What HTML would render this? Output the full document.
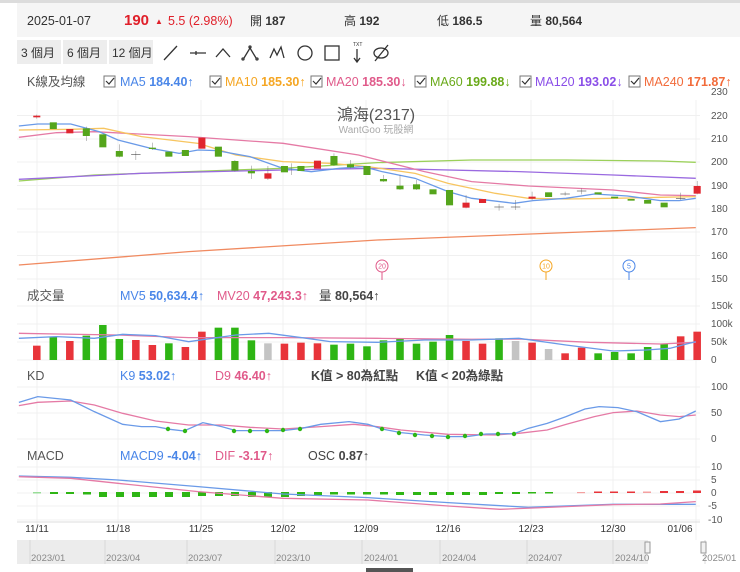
<!DOCTYPE html>
<html><head><meta charset="utf-8"><style>
body{margin:0;width:740px;height:572px;overflow:hidden;background:#fff;font-family:"Liberation Sans","Noto Sans CJK TC",sans-serif;}
svg{position:absolute;left:0;top:0}
text{font-family:"Liberation Sans","Noto Sans CJK TC",sans-serif}
.ns{vector-effect:non-scaling-stroke;fill:none}
</style></head><body>
<svg width="740" height="572" viewBox="0 0 740 572">
<rect x="0" y="0" width="740" height="3" fill="#dcdcdc"/>
<rect x="17" y="3" width="723" height="34" fill="#f5f5f5"/>
<g font-size="13" fill="#333">
<text x="27" y="25" font-size="12.5">2025-01-07</text>
<text x="124" y="25" font-size="15" font-weight="bold" fill="#e0202a">190</text>
<text x="155" y="24" font-size="8" fill="#e0202a">▲</text>
<text x="168" y="25" font-size="12.5" fill="#e0202a">5.5 (2.98%)</text>
<text x="250" y="25" font-size="12">開 <tspan font-weight="bold">187</tspan></text>
<text x="344" y="25" font-size="12">高 <tspan font-weight="bold">192</tspan></text>
<text x="437" y="25" font-size="12">低 <tspan font-weight="bold">186.5</tspan></text>
<text x="530" y="25" font-size="12">量 <tspan font-weight="bold">80,564</tspan></text>
</g>
<g fill="#ededed"><rect x="17" y="40" width="44" height="24"/><rect x="63" y="40" width="44" height="24"/><rect x="109" y="40" width="44" height="24"/></g>
<g font-size="12" fill="#333"><text x="21" y="57">3 個月</text><text x="67" y="57">6 個月</text><text x="112" y="57">12 個月</text></g>
<g stroke="#333" stroke-width="1.3" fill="none">
<path d="M164 60 L177 46"/>
<path d="M190 53 H206 M196 51 V55"/>
<path d="M216 57 L223 49 L230 57"/>
<path d="M244 58 L250 48 L256 58"/><circle cx="250" cy="47" r="1" /><circle cx="243" cy="59" r="1"/><circle cx="257" cy="59" r="1"/>
<path d="M270 58 L274 49 L277 55 L281 47 L284 58"/>
<circle cx="305" cy="53" r="7"/>
<rect x="325" y="46" width="14" height="14"/>
<path d="M357 49 V62 M354 58 L357 62 L360 58"/>
<ellipse cx="381" cy="53" rx="7" ry="5"/><path d="M375 61 L388 45"/>
</g>
<text x="353" y="46" font-size="5" fill="#333">TXT</text>
<!-- MA legend -->
<g font-size="12.5">
<text x="27" y="86" fill="#555">K線及均線</text>
<g fill="#fff" stroke="#777"><rect x="104" y="76" width="11" height="11"/><rect x="210" y="76" width="11" height="11"/><rect x="311" y="76" width="11" height="11"/><rect x="415" y="76" width="11" height="11"/><rect x="520" y="76" width="11" height="11"/><rect x="629" y="76" width="11" height="11"/></g>
<g stroke="#333" fill="none" stroke-width="1.2"><path d="M106 81 l3 3 l5 -6 M212 81 l3 3 l5 -6 M313 81 l3 3 l5 -6 M417 81 l3 3 l5 -6 M522 81 l3 3 l5 -6 M631 81 l3 3 l5 -6"/></g>
<text x="120" y="86" fill="#4a86e8">MA5 <tspan font-weight="bold">184.40↑</tspan></text>
<text x="225" y="86" fill="#f5a623">MA10 <tspan font-weight="bold">185.30↑</tspan></text>
<text x="326" y="86" fill="#e05a8a">MA20 <tspan font-weight="bold">185.30↓</tspan></text>
<text x="430" y="86" fill="#6aaa1a">MA60 <tspan font-weight="bold">199.88↓</tspan></text>
<text x="535" y="86" fill="#8a4ee8">MA120 <tspan font-weight="bold">193.02↓</tspan></text>
<text x="644" y="86" fill="#f26b3a">MA240 <tspan font-weight="bold">171.87↑</tspan></text>
</g>
<!-- grids -->
<g stroke="#f0f0f0" stroke-width="1">
<path d="M37 100V540 M118 100V540 M201 100V540 M283 100V540 M366 100V540 M448 100V540 M531 100V540 M613 100V540 M696 100V540"/>
<path d="M17 115.5H700 M17 139H700 M17 162H700 M17 185.5H700 M17 209H700 M17 232H700 M17 255.5H700 M17 279H700"/>
<path d="M17 306H700 M17 324H700 M17 342H700 M17 360H700"/>
<path d="M17 387H700 M17 413H700 M17 439H700"/>
<path d="M17 467H700 M17 480H700 M17 493H700 M17 506H700 M17 520H700"/>
</g>
<g font-size="10" fill="#555">
<text x="711" y="95">230</text><text x="711" y="119">220</text><text x="711" y="142">210</text><text x="711" y="165">200</text><text x="711" y="189">190</text><text x="711" y="212">180</text><text x="711" y="235">170</text><text x="711" y="259">160</text><text x="711" y="282">150</text>
<text x="711" y="309">150k</text><text x="711" y="327">100k</text><text x="711" y="345">50k</text><text x="711" y="363">0</text>
<text x="711" y="390">100</text><text x="711" y="416">50</text><text x="711" y="442">0</text>
<text x="711" y="470">10</text><text x="711" y="483">5</text><text x="711" y="496">0</text><text x="708" y="509">-5</text><text x="708" y="523">-10</text>
</g>
<text x="376" y="120" font-size="16" fill="#555" text-anchor="middle">鴻海(2317)</text>
<text x="376" y="133" font-size="10" fill="#aaa" text-anchor="middle">WantGoo 玩股網</text>
<!-- main chart in zoom coords -->
<g transform="translate(0,100) scale(0.4717,0.3333)">
<polyline class="ns" stroke="#f08a60" stroke-width="1.3" points="40,495 400,455 800,420 1200,398 1475,383"/>
<polyline class="ns" stroke="#9bd05a" stroke-width="1.3" points="40,243 200,225 400,215 600,205 800,188 1000,180 1200,180 1400,183 1475,187"/>
<polyline class="ns" stroke="#9a6ae0" stroke-width="1.3" points="40,238 300,220 600,210 800,205 1100,215 1300,225 1475,235"/>
<polyline class="ns" stroke="#e57aa5" stroke-width="1.3" points="40,112 120,98 200,95 400,110 600,130 760,165 900,215 1000,245 1120,258 1300,270 1400,285 1475,287"/>
<polyline class="ns" stroke="#f7c560" stroke-width="1.3" points="40,90 150,88 220,85 300,110 420,130 500,165 600,185 700,190 780,200 880,220 950,250 1050,280 1120,295 1200,297 1300,295 1400,292 1475,290"/>
<polyline class="ns" stroke="#6a9ae8" stroke-width="1.3" points="40,78 80,72 150,72 210,95 250,120 320,145 380,160 420,150 460,152 530,170 600,205 660,215 720,205 770,200 810,215 880,235 950,275 1000,295 1090,310 1130,302 1200,295 1260,282 1330,288 1400,302 1440,302 1475,295"/>
<g class="ns" stroke="#666" stroke-width="1">
<path d="M78 44V56 M183 80V123 M253 133V172 M288 153V180 M323 128V150 M498 180V215 M533 197V237 M568 198V240 M743 180V205 M813 225V246 M848 225V270 M883 240V270 M988 285V325 M1093 300V330 M1128 275V300 M1233 265V283 M1198 275V287 M1058 312V332 M1443 278V300 M1478 243V283 M618 190V225 M708 160V198"/>
</g>
<g fill="#e0262e">
<rect x="70.5" y="47" width="15" height="5"/><rect x="140.5" y="87" width="15" height="13"/><rect x="420.5" y="113" width="15" height="33"/><rect x="560.5" y="220" width="15" height="16"/><rect x="665.5" y="182" width="15" height="24"/><rect x="980.5" y="308" width="15" height="15"/><rect x="1015.5" y="297" width="15" height="12"/><rect x="1120.5" y="290" width="15" height="6"/><rect x="1470.5" y="258" width="15" height="23"/>
</g>
<g fill="#55a51c">
<rect x="105.5" y="67" width="15" height="20"/><rect x="175.5" y="85" width="15" height="23"/><rect x="210.5" y="103" width="15" height="39"/><rect x="245.5" y="153" width="15" height="17"/><rect x="315.5" y="143" width="15" height="4"/><rect x="350.5" y="155" width="15" height="15"/><rect x="385.5" y="150" width="15" height="18"/><rect x="455.5" y="140" width="15" height="30"/><rect x="490.5" y="183" width="15" height="29"/><rect x="525.5" y="213" width="15" height="7"/><rect x="595.5" y="198" width="15" height="19"/><rect x="630.5" y="198" width="15" height="15"/><rect x="700.5" y="168" width="15" height="27"/><rect x="735.5" y="193" width="15" height="9"/><rect x="770.5" y="198" width="15" height="27"/><rect x="805.5" y="237" width="15" height="7"/><rect x="840.5" y="257" width="15" height="11"/><rect x="875.5" y="253" width="15" height="15"/><rect x="910.5" y="268" width="15" height="15"/><rect x="945.5" y="270" width="15" height="46"/><rect x="1155.5" y="277" width="15" height="14"/><rect x="1260.5" y="277" width="15" height="6"/><rect x="1295.5" y="290" width="15" height="5"/><rect x="1330.5" y="297" width="15" height="5"/><rect x="1365.5" y="300" width="15" height="11"/><rect x="1400.5" y="308" width="15" height="14"/>
</g>
<g class="ns" stroke="#222" stroke-width="1.5"><path d="M278 163H298 M1048 321H1068 M1083 321H1103 M1188 282H1208 M1223 273H1243 M1433 295H1453"/></g>
</g>
<!-- markers -->
<g fill="#fff" stroke-width="1" font-size="7" text-anchor="middle">
<line x1="382" y1="272" x2="382" y2="280" stroke="#e05a8a"/><circle cx="382" cy="266" r="6" stroke="#e05a8a"/><text x="382" y="268.5" fill="#e05a8a" stroke="none">20</text>
<line x1="546" y1="272" x2="546" y2="280" stroke="#f5a623"/><circle cx="546" cy="266" r="6" stroke="#f5a623"/><text x="546" y="268.5" fill="#f5a623" stroke="none">10</text>
<line x1="629" y1="272" x2="629" y2="280" stroke="#4a86e8"/><circle cx="629" cy="266" r="6" stroke="#4a86e8"/><text x="629" y="268.5" fill="#4a86e8" stroke="none">5</text>
</g>
<!-- volume -->
<g font-size="12.5">
<text x="27" y="300" fill="#555">成交量</text>
<text x="120" y="300" fill="#4a86e8">MV5 <tspan font-weight="bold">50,634.4↑</tspan></text>
<text x="217" y="300" fill="#e05a8a">MV20 <tspan font-weight="bold">47,243.3↑</tspan></text>
<text x="319" y="300" fill="#444">量 <tspan font-weight="bold">80,564↑</tspan></text>
</g>
<g transform="translate(0,285) scale(0.4717,0.3333)">
<g fill="#e8343a"><rect x="70" y="182" width="16" height="43"/><rect x="140" y="168" width="16" height="57"/><rect x="280" y="165" width="16" height="60"/><rect x="315" y="180" width="16" height="45"/><rect x="385" y="186" width="16" height="39"/><rect x="420" y="140" width="16" height="85"/><rect x="595" y="176" width="16" height="49"/><rect x="630" y="173" width="16" height="52"/><rect x="665" y="175" width="16" height="50"/><rect x="980" y="168" width="16" height="57"/><rect x="1015" y="176" width="16" height="49"/><rect x="1120" y="173" width="16" height="52"/><rect x="1190" y="205" width="16" height="20"/><rect x="1225" y="188" width="16" height="37"/><rect x="1435" y="154" width="16" height="71"/><rect x="1470" y="140" width="16" height="85"/></g>
<g fill="#2eb514"><rect x="105" y="155" width="16" height="70"/><rect x="175" y="152" width="16" height="73"/><rect x="210" y="120" width="16" height="105"/><rect x="245" y="162" width="16" height="63"/><rect x="350" y="175" width="16" height="50"/><rect x="455" y="128" width="16" height="97"/><rect x="490" y="128" width="16" height="97"/><rect x="525" y="166" width="16" height="59"/><rect x="700" y="179" width="16" height="46"/><rect x="735" y="176" width="16" height="49"/><rect x="770" y="184" width="16" height="41"/><rect x="805" y="166" width="16" height="59"/><rect x="840" y="160" width="16" height="65"/><rect x="875" y="176" width="16" height="49"/><rect x="910" y="170" width="16" height="55"/><rect x="945" y="150" width="16" height="75"/><rect x="1050" y="160" width="16" height="65"/><rect x="1260" y="205" width="16" height="20"/><rect x="1295" y="201" width="16" height="24"/><rect x="1330" y="205" width="16" height="20"/><rect x="1365" y="186" width="16" height="39"/><rect x="1400" y="177" width="16" height="48"/></g>
<g fill="#c4c4c4"><rect x="560" y="175" width="16" height="50"/><rect x="1085" y="168" width="16" height="57"/><rect x="1155" y="192" width="16" height="33"/></g>
<polyline class="ns" stroke="#e57aa5" stroke-width="1.3" points="40,145 120,147 250,150 400,158 600,158 800,160 1000,163 1100,162 1250,172 1400,177 1475,172"/>
<polyline class="ns" stroke="#6a9ae8" stroke-width="1.3" points="40,160 120,155 200,160 260,148 330,152 400,170 450,160 500,150 570,145 650,160 700,170 800,172 900,165 1000,165 1100,160 1200,180 1300,198 1370,195 1420,190 1475,170"/>
</g>
<!-- KD -->
<g font-size="12.5">
<text x="27" y="380" fill="#555">KD</text>
<text x="120" y="380" fill="#4a86e8">K9 <tspan font-weight="bold">53.02↑</tspan></text>
<text x="215" y="380" fill="#e05a8a">D9 <tspan font-weight="bold">46.40↑</tspan></text>
<text x="311" y="380" fill="#444" font-weight="bold">K值 &gt; 80為紅點</text>
<text x="416" y="380" fill="#444" font-weight="bold">K值 &lt; 20為綠點</text>
</g>
<g transform="translate(0,285) scale(0.4717,0.3333)">
<polyline class="ns" stroke="#e57aa5" stroke-width="1.3" points="40,362 80,352 150,348 200,360 260,385 330,408 400,420 470,420 530,427 600,432 680,425 750,418 800,425 850,435 950,448 1050,450 1100,445 1160,435 1200,418 1260,395 1300,383 1350,378 1400,390 1440,395 1475,390"/>
<polyline class="ns" stroke="#6a9ae8" stroke-width="1.3" points="40,352 80,335 150,345 200,380 260,418 300,425 330,425 360,433 390,438 430,413 470,425 500,437 600,437 640,430 680,418 740,410 780,418 810,432 850,443 900,450 950,455 990,455 1030,447 1090,446 1120,430 1160,415 1200,395 1240,372 1270,365 1310,368 1350,380 1400,410 1440,402 1475,378"/>
</g>
<g fill="#2eb514">
<circle cx="168" cy="429" r="2.2"/><circle cx="185" cy="431" r="2.2"/><circle cx="234" cy="431" r="2.2"/><circle cx="250" cy="431" r="2.2"/><circle cx="267" cy="431" r="2.2"/><circle cx="283" cy="430" r="2.2"/><circle cx="300" cy="429" r="2.2"/><circle cx="382" cy="429" r="2.2"/><circle cx="399" cy="433" r="2.2"/><circle cx="415" cy="435" r="2.2"/><circle cx="432" cy="436" r="2.2"/><circle cx="448" cy="437" r="2.2"/><circle cx="465" cy="436" r="2.2"/><circle cx="481" cy="434" r="2.2"/><circle cx="498" cy="434" r="2.2"/><circle cx="514" cy="434" r="2.2"/>
</g>
<!-- MACD -->
<g font-size="12.5">
<text x="27" y="460" fill="#555">MACD</text>
<text x="120" y="460" fill="#4a86e8">MACD9 <tspan font-weight="bold">-4.04↑</tspan></text>
<text x="215" y="460" fill="#e05a8a">DIF <tspan font-weight="bold">-3.17↑</tspan></text>
<text x="308" y="460" fill="#444">OSC <tspan font-weight="bold">0.87↑</tspan></text>
</g>
<g fill="#2eb514">
<rect x="33" y="492" width="8" height="1.5" fill="#9d9"/><rect x="50" y="492" width="8" height="2"/><rect x="66" y="492" width="8" height="2"/><rect x="83" y="492" width="8" height="2.5"/><rect x="99" y="492" width="8" height="5"/><rect x="116" y="492" width="8" height="5"/><rect x="132" y="492" width="8" height="5"/><rect x="149" y="492" width="8" height="5"/><rect x="165" y="492" width="8" height="5"/><rect x="182" y="492" width="8" height="5"/><rect x="198" y="492" width="8" height="4"/><rect x="215" y="492" width="8" height="4"/><rect x="231" y="492" width="8" height="4"/><rect x="248" y="492" width="8" height="5"/><rect x="264" y="492" width="8" height="5"/><rect x="281" y="492" width="8" height="5"/><rect x="297" y="492" width="8" height="4"/><rect x="314" y="492" width="8" height="3"/><rect x="330" y="492" width="8" height="2.5"/><rect x="347" y="492" width="8" height="2.5"/><rect x="363" y="492" width="8" height="2.5"/><rect x="380" y="492" width="8" height="2.5"/><rect x="396" y="492" width="8" height="3"/><rect x="413" y="492" width="8" height="3"/><rect x="429" y="492" width="8" height="3"/><rect x="446" y="492" width="8" height="3"/><rect x="462" y="492" width="8" height="3"/><rect x="479" y="492" width="8" height="3"/><rect x="495" y="492" width="8" height="2"/><rect x="512" y="492" width="8" height="2"/><rect x="528" y="492" width="8" height="1.5"/><rect x="545" y="492" width="8" height="1.5"/>
</g>
<g fill="#e8343a">
<rect x="577" y="492" width="8" height="1.2" fill="#f4a0a0"/><rect x="594" y="491.5" width="8" height="1.5"/><rect x="610" y="491.5" width="8" height="1.5"/><rect x="627" y="491.5" width="8" height="1.5"/><rect x="643" y="491.5" width="8" height="1.5" fill="#f4a0a0"/><rect x="660" y="491" width="8" height="2"/><rect x="676" y="491" width="8" height="2"/><rect x="693" y="490.5" width="8" height="2.5"/>
</g>
<g transform="translate(0,440) scale(0.4717,0.3333)">
<polyline class="ns" stroke="#6a9ae8" stroke-width="1.3" points="40,108 150,112 250,120 420,140 600,162 780,173 950,188 1120,202 1300,193 1475,193"/>
<polyline class="ns" stroke="#e57aa5" stroke-width="1.3" points="40,110 150,115 250,130 420,155 600,175 780,180 950,198 1060,208 1150,203 1300,194 1400,192 1475,185"/>
</g>
<path d="M17 522H700" stroke="#ddd"/>
<g font-size="10" fill="#333" text-anchor="middle">
<text x="37" y="532">11/11</text><text x="118" y="532">11/18</text><text x="201" y="532">11/25</text><text x="283" y="532">12/02</text><text x="366" y="532">12/09</text><text x="448" y="532">12/16</text><text x="531" y="532">12/23</text><text x="613" y="532">12/30</text><text x="680" y="532">01/06</text>
</g>
<!-- navigator -->
<rect x="17" y="540" width="689" height="24" fill="#ececec"/>
<rect x="648" y="540" width="56" height="24" fill="#fff"/>
<g stroke="#d8d8d8"><path d="M30 540V564 M105 540V564 M187 540V564 M275 540V564 M362 540V564 M440 540V564 M527 540V564 M613 540V564"/></g>
<g font-size="9.5" fill="#888">
<text x="31" y="561">2023/01</text><text x="106" y="561">2023/04</text><text x="188" y="561">2023/07</text><text x="276" y="561">2023/10</text><text x="364" y="561">2024/01</text><text x="442" y="561">2024/04</text><text x="528" y="561">2024/07</text><text x="615" y="561">2024/10</text><text x="702" y="561">2025/01</text>
</g>
<g fill="#f2f2f2" stroke="#999"><rect x="645" y="542" width="5" height="11"/><rect x="701" y="542" width="5" height="11"/></g>
<rect x="366" y="568" width="47" height="4" fill="#555"/>
</svg>
</body></html>
